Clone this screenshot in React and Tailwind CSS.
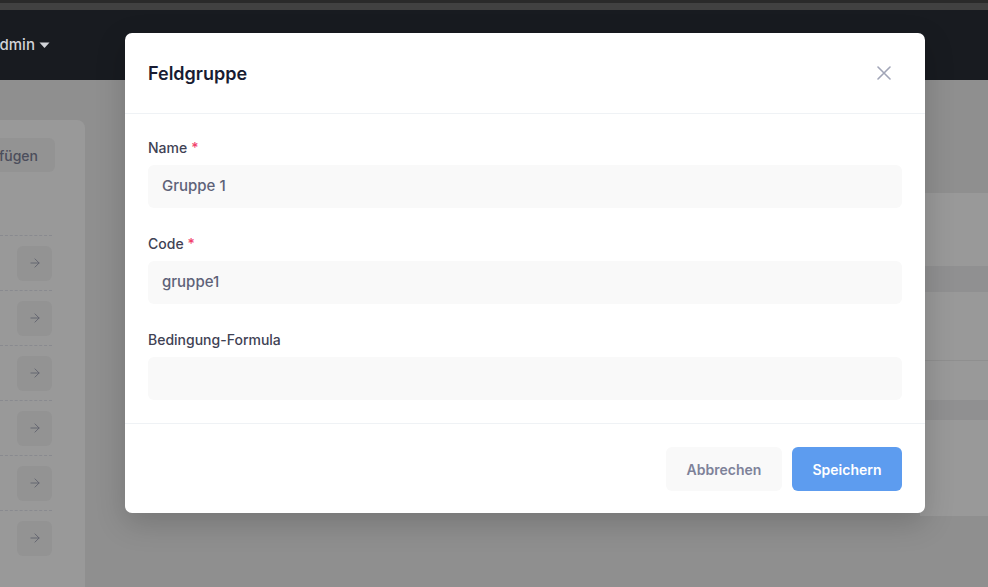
import { ArrowRight } from "lucide-react";

const rows = [0, 1, 2, 3, 4, 5];

function CloseIcon() {
  return (
    <svg width="14" height="14" viewBox="0 0 14 14" fill="none">
      <path d="M1 1L13 13M13 1L1 13" stroke="#a1a5b7" strokeWidth="1.6" strokeLinecap="round" />
    </svg>
  );
}

function Field({ label, required, value }) {
  return (
    <div className="flex flex-col">
      <label className="mb-[7px] text-[14px] leading-[20px] font-medium text-[#3f4254]">
        {label}
        {required && <span className="ml-[4px] text-[#f1416c]">*</span>}
      </label>
      <div className="flex h-[43px] items-center rounded-[6px] bg-[#f9f9f9] px-[14px] text-[15px] font-medium text-[#5e6278]">
        {value}
      </div>
    </div>
  );
}

export default function App() {
  return (
    <div className="relative flex h-[587px] w-[988px] flex-col overflow-hidden bg-[#eeeeee] font-['Inter',sans-serif]">

      {/* top bar (stays above backdrop) */}
      <div className="relative z-20 flex flex-col">
        <div className="h-[3px] bg-[#2a2a2a]" />
        <div className="h-[7px] bg-[#414141]" />
        <div className="flex h-[70px] items-center bg-[#181b20]">
          <div className="ml-[-11px] flex items-center gap-[4px] text-[15px] font-medium text-[#d1d3d8]">
            Admin
            <svg width="11" height="7" viewBox="0 0 11 7">
              <path d="M0.5 0.5H10.5L5.5 6Z" fill="#d1d3d8" />
            </svg>
          </div>
        </div>
      </div>

      {/* page content */}
      <div className="flex flex-1">
        <div className="mt-[40px] flex w-[85px] shrink-0 flex-col overflow-hidden rounded-tr-[8px] bg-white pt-[18px]">
          <div className="flex justify-end pr-[30px]">
            <div className="flex h-[34px] shrink-0 items-center rounded-[6px] bg-[#f5f5f5] px-[17px] text-[14px] font-medium whitespace-nowrap text-[#7e8299]">
              Feld hinzufügen
            </div>
          </div>
          <div className="mt-[63px] flex flex-col pr-[33px]">
            {rows.map((r) => (
              <div key={r} className="flex h-[55px] items-center justify-end border-t border-dashed border-[#e4e6ef]">
                <div className="flex h-[35px] w-[35px] items-center justify-center rounded-[6px] bg-[#f5f5f5] text-[#a1a5b7]">
                  <ArrowRight size={14} strokeWidth={1.6} />
                </div>
              </div>
            ))}
          </div>
        </div>

        <div className="ml-[835px] mt-[113px] flex h-[323px] flex-1 flex-col bg-white">
          <div className="h-[73px]" />
          <div className="h-[26px] bg-[#f1f1f2]" />
          <div className="h-[69px] border-b border-[#eeeeee]" />
          <div className="h-[39px]" />
          <div className="h-[20px] bg-[#f1f1f2]" />
          <div className="flex-1" />
        </div>
      </div>

      {/* backdrop */}
      <div className="absolute inset-0 z-10 bg-black/40" />

      {/* modal */}
      <div className="absolute left-[125px] top-[33px] z-30 flex w-[800px] flex-col rounded-[7px] bg-white shadow-[0_10px_30px_rgba(0,0,0,0.18)]">
        <div className="flex h-[81px] items-center justify-between border-b border-[#eff2f5] px-[23px]">
          <h2 className="text-[18px] font-semibold text-[#181c32]">Feldgruppe</h2>
          <button className="mr-[8px] flex h-[20px] w-[20px] items-center justify-center">
            <CloseIcon />
          </button>
        </div>

        <div className="flex flex-col gap-[26px] px-[23px] pt-[24px] pb-[23px]">
          <Field label="Name" required value="Gruppe 1" />
          <Field label="Code" required value="gruppe1" />
          <Field label="Bedingung-Formula" value="" />
        </div>

        <div className="flex justify-end gap-[10px] border-t border-[#eff2f5] px-[23px] pt-[23px] pb-[22px]">
          <button className="flex h-[44px] w-[116px] items-center justify-center rounded-[6px] bg-[#f9f9f9] text-[14px] font-semibold text-[#7e8299]">
            Abbrechen
          </button>
          <button className="flex h-[44px] w-[110px] items-center justify-center rounded-[6px] bg-[#5d9cef] text-[14px] font-semibold text-white">
            Speichern
          </button>
        </div>
      </div>
    </div>
  );
}
